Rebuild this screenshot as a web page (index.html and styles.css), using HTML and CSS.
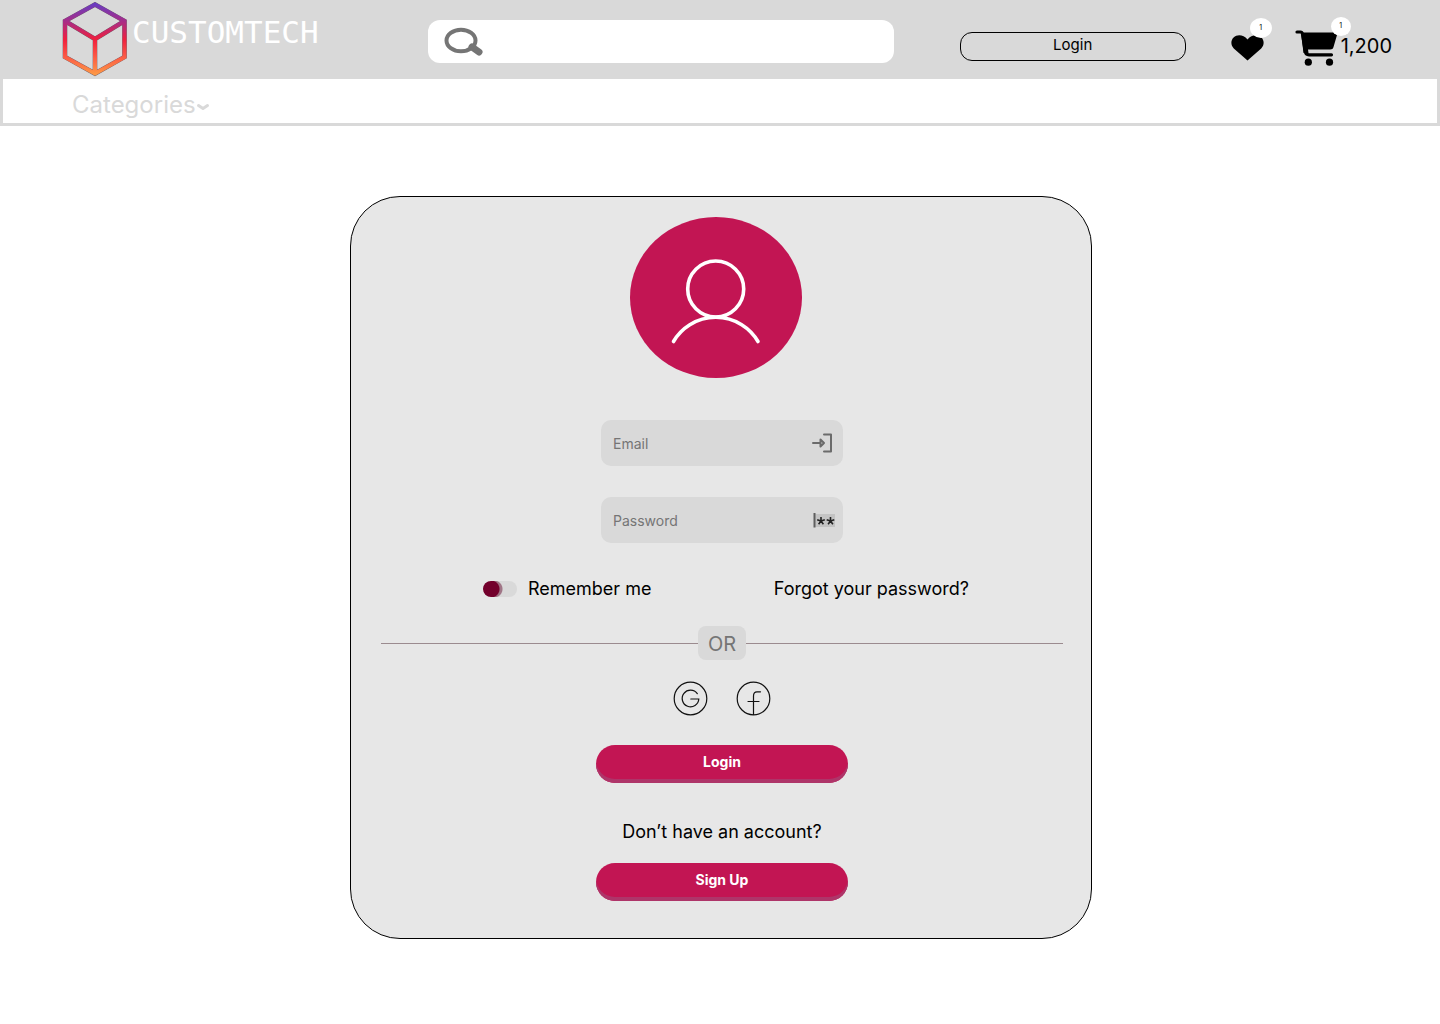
FILE: index.html
```html
<!DOCTYPE html>
<html lang="en">
<head>
<meta charset="utf-8">
<meta name="viewport" content="width=device-width, initial-scale=1">
<title>CustomTech – Login</title>
<link rel="stylesheet" href="styles.css">
</head>
<body>
<header class="topbar">
  <a class="brand" href="#">
    <svg class="brand-mark" viewBox="0 0 66 75" width="66" height="75" aria-hidden="true">
      <defs>
        <linearGradient id="cube" gradientUnits="userSpaceOnUse" x1="0" y1="2" x2="0" y2="73">
          <stop offset="0" stop-color="#6a3cc0"/>
          <stop offset=".25" stop-color="#a92d86"/>
          <stop offset=".5" stop-color="#f0203f"/>
          <stop offset=".75" stop-color="#fb5c45"/>
          <stop offset="1" stop-color="#fd9a45"/>
        </linearGradient>
      </defs>
      <g fill="none" stroke-linejoin="miter">
        <path d="M33 2.500 62.500 19V55L33 71.500 3 55V19ZM3 19 33 37 62.500 19M33 37V71" stroke="#6b5a68" stroke-width="4.600"/>
        <path d="M33 2.500 62.500 19V55L33 71.500 3 55V19ZM3 19 33 37 62.500 19M33 37V71" stroke="url(#cube)" stroke-width="4"/>
      </g>
    </svg>
    <span class="brand-name">CUSTOMTECH</span>
  </a>
  <form class="search" role="search">
    <svg viewBox="0 0 40 30" width="40" height="30" aria-hidden="true">
      <ellipse cx="17" cy="13.500" rx="14.500" ry="10.800" fill="none" stroke="#757575" stroke-width="4"/>
      <path d="M28 20 35 25" stroke="#757575" stroke-width="7" stroke-linecap="round"/>
    </svg>
    <input class="search-input" type="search" aria-label="Search">
  </form>
  <button class="login-link" type="button">Login</button>
  <div class="shortcuts">
    <a class="shortcut" href="#" aria-label="Favourites">
      <svg viewBox="0 0 33 26" width="33" height="26" aria-hidden="true">
        <path d="M16.500 25.500 2.800 13.500C-.5 10.300-.3 5.300 2.600 2.600 6.300-.9 12.500-.3 16.500 4.600 20.500-.3 26.700-.9 30.400 2.600 33.300 5.300 33.500 10.300 30.200 13.500Z"/>
      </svg>
      <span class="badge badge-heart">1</span>
    </a>
    <a class="shortcut cart" href="#" aria-label="Cart">
      <svg viewBox="0 0 43 36" width="43" height="36" aria-hidden="true">
        <path d="M6 2.500H40Q42.500 2.500 42 5L38.500 17Q38 19.500 35 19.500H13L13.500 23H8.500Z"/>
        <path d="M2 2H5.500Q7 2 7.500 4L10.300 21.500Q10.800 24.800 14 24.800H36.500" fill="none" stroke="#000" stroke-width="3.200" stroke-linecap="round"/>
        <circle cx="13.300" cy="32.200" r="3.600"/><circle cx="34.500" cy="32.200" r="3.600"/>
      </svg>
      <span class="badge badge-cart">1</span>
      <span class="total">1,200</span>
    </a>
  </div>
</header>
<nav class="navbar">
  <button class="categories" type="button">Categories<svg viewBox="0 0 14 8" width="14" height="8" aria-hidden="true"><path d="M2.500 2.500 7 5.500 11.500 2.500" fill="none" stroke="#d9d9d9" stroke-width="3" stroke-linecap="round" stroke-linejoin="round"/></svg></button>
</nav>
<main class="page">
  <form class="card">
    <svg class="avatar" viewBox="0 0 172 161" width="172" height="161" aria-hidden="true">
      <ellipse cx="86" cy="80.500" rx="86" ry="80.500" fill="#c21553"/>
      <g fill="none" stroke="#fff" stroke-width="3.600" stroke-linecap="round">
        <circle cx="85.700" cy="72" r="28"/>
        <path d="M43.500 124.500A49 49 0 0 1 128 124.500"/>
      </g>
    </svg>
    <div class="fields">
      <label class="field">
        <input type="email" placeholder="Email" aria-label="Email">
        <svg viewBox="0 0 20 20" width="20" height="20" aria-hidden="true">
          <g fill="none" stroke="#6b6b6b" stroke-width="2" stroke-linecap="round" stroke-linejoin="round"><path d="M1 10H8M8.500 6.500 12 10 8.500 13.500ZM12 1.500H19V18.500H12"/></g>
        </svg>
      </label>
      <label class="field field-password">
        <input type="password" placeholder="Password" aria-label="Password">
        <svg viewBox="0 0 22 16" width="22" height="16" aria-hidden="true">
          <rect x="2" y="2" width="20" height="13" fill="#c3c3c3"/>
          <path d="M1.500 1V15.500" stroke="#5e5e5e" stroke-width="2"/>
          <g transform="translate(0 1)" stroke="#222" stroke-width="1.600"><path d="M8 8V4M8 8 4.200 6.800M8 8 11.800 6.800M8 8 5.600 11.200M8 8 10.400 11.200M17.500 8V4M17.500 8 13.700 6.800M17.500 8 21.300 6.800M17.500 8 15.100 11.200M17.500 8 19.900 11.200"/></g>
        </svg>
      </label>
    </div>
    <div class="options">
      <label class="remember"><input class="switch" type="checkbox">Remember me</label>
      <a class="forgot" href="#">Forgot your password?</a>
    </div>
    <div class="divider"><span class="or">OR</span></div>
    <div class="social">
      <button type="button" aria-label="Continue with Google">
        <svg viewBox="0 0 35 35" width="35" height="35" aria-hidden="true"><g fill="none" stroke="#111" stroke-width="1.200"><circle cx="17.500" cy="17.500" r="16.300"/><path d="M24.300 12.700A8.300 8.300 0 1 0 25.800 18H17.800" stroke-linecap="round"/></g></svg>
      </button>
      <button type="button" aria-label="Continue with Facebook">
        <svg viewBox="0 0 35 35" width="35" height="35" aria-hidden="true"><g fill="none" stroke="#111" stroke-width="1.200"><circle cx="17.500" cy="17.500" r="16.300"/><path d="M17.500 33.500V15Q17.500 10.800 21 10.800H24.500M12 20.500H23" stroke-linecap="round"/></g></svg>
      </button>
    </div>
    <button class="action" type="submit">Login</button>
    <p class="prompt">Don’t have an account?</p>
    <button class="action" type="button">Sign Up</button>
  </form>
</main>
</body>
</html>
```
FILE: styles.css
```css
* { box-sizing: border-box; }

body {
  margin: 0;
  background: #fff;
  color: #000;
  font-family: Inter, "Liberation Sans", sans-serif;
}

a { color: inherit; text-decoration: none; }

button, input { font: inherit; color: inherit; }

button {
  padding: 0;
  border: 0;
  background: none;
  cursor: pointer;
}

svg { display: block; flex: none; }

.topbar {
  display: flex;
  align-items: flex-start;
  height: 79px;
  padding: 0 48px 0 62px;
  background: #d9d9d9;
}

.brand {
  display: flex;
  gap: 4px;
  margin-right: 109px;
  padding-top: 2px;
}

.brand-name {
  padding-top: 12px;
  color: #fff;
  font: 31px/36px "DejaVu Sans Mono", monospace;
}

.search {
  display: flex;
  align-items: center;
  flex: 1;
  height: 43px;
  margin: 20px 66px 0 0;
  padding: 0 16px;
  border-radius: 12px;
  background: #fff;
}

.search-input {
  flex: 1;
  min-width: 0;
  border: 0;
  outline: 0;
  background: none;
}

.login-link {
  width: 226px;
  height: 29px;
  margin: 32px 45px 0 0;
  padding-bottom: 4px;
  border: 1px solid #000;
  border-radius: 12px;
  font-size: 15px;
  line-height: 20px;
}

.shortcuts {
  display: flex;
  align-items: flex-start;
  gap: 31px;
  padding-top: 30px;
}

.shortcut {
  position: relative;
  display: flex;
  padding-top: 5px;
}

.cart { gap: 3px; padding-top: 0; }

.total { font-size: 20px; line-height: 32px; }

.badge {
  position: absolute;
  border-radius: 50%;
  background: #fff;
  font-size: 7px;
  text-align: center;
}

.badge-heart {
  top: -12px;
  left: 19px;
  width: 22px;
  height: 20px;
  line-height: 20px;
}

.badge-cart {
  top: -13px;
  left: 36px;
  width: 20px;
  height: 19px;
  line-height: 18px;
}

.navbar {
  display: flex;
  align-items: center;
  height: 47px;
  padding: 8px 69px 0;
  border: 3px solid #d9d9d9;
  border-top: 0;
}

.categories {
  display: flex;
  align-items: center;
  color: #d9d9d9;
  font-size: 24px;
  line-height: 32px;
}

.categories svg { margin-top: 4px; }

.page {
  display: flex;
  justify-content: center;
  padding: 70px 16px 70px 18px;
}

.card {
  display: flex;
  flex-direction: column;
  align-items: center;
  width: 100%;
  max-width: 742px;
  padding: 20px 28px 37px 30px;
  border: 1px solid #000;
  border-radius: 50px;
  background: #e7e7e7;
}

.avatar { margin: 0 12px 42px 0; }

.fields {
  display: grid;
  grid-template-columns: minmax(0, 1fr);
  gap: 31px;
  width: 242px;
}

.field {
  display: flex;
  align-items: center;
  height: 46px;
  padding: 0 11px 0 12px;
  border-radius: 10px;
  background: #d9d9d9;
}

.field-password { padding-right: 8px; }

.field input {
  flex: 1;
  min-width: 0;
  padding: 0;
  border: 0;
  outline: 0;
  background: none;
  font-size: 14px;
}

.field input::placeholder { color: #757575; opacity: 1; }

.options {
  display: flex;
  justify-content: space-between;
  width: 100%;
  max-width: 486px;
  margin: 34px 0 25px 8px;
  font-size: 18px;
  line-height: 24px;
}

.remember {
  display: flex;
  align-items: center;
  gap: 11px;
}

.switch {
  appearance: none;
  width: 34px;
  height: 16px;
  margin: 0;
  border-radius: 8px;
  background: radial-gradient(circle at 8px 8px, #73002c 8px, transparent 9px),
    radial-gradient(circle at 11px 8px, #a07586 8px, transparent 9px), #d9d9d9;
}

.divider {
  display: flex;
  align-items: center;
  align-self: stretch;
}

.divider::before,
.divider::after {
  content: "";
  flex: 1;
  height: 1px;
  background: #9b8b8f;
}

.or {
  width: 48px;
  height: 34px;
  border-radius: 8px;
  background: #d9d9d9;
  color: #757575;
  font-size: 20px;
  line-height: 36px;
  text-align: center;
}

.social {
  display: flex;
  gap: 28px;
  margin: 21px 0 29px;
}

.action {
  width: 252px;
  height: 38px;
  padding-bottom: 6px;
  border-radius: 19px;
  background: #c21553;
  box-shadow: inset 0 -4px #ae3569;
  color: #fff;
  font-size: 14px;
  font-weight: 700;
}

.prompt {
  margin: 37px 0 19px;
  font-size: 18px;
  line-height: 24px;
}
```
